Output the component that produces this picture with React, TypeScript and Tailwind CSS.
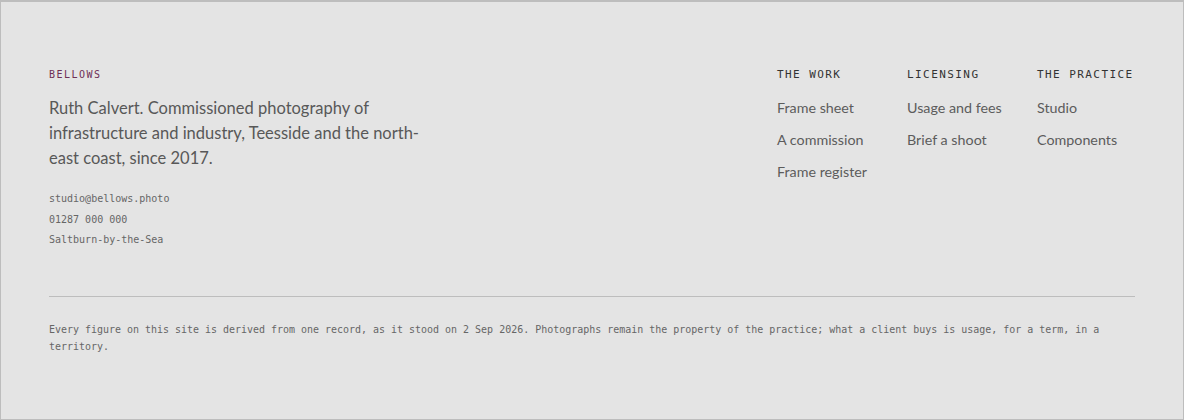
const mono = "font-['DejaVu_Sans_Mono','Liberation_Mono',monospace]";
const sans = "font-['Lato','Noto_Sans',sans-serif]";

const COLUMNS = [
  { title: "The work", links: ["Frame sheet", "A commission", "Frame register"] },
  { title: "Licensing", links: ["Usage and fees", "Brief a shoot"] },
  { title: "The practice", links: ["Studio", "Components"] },
];

export default function App() {
  return (
    <footer className="box-border h-[420px] w-full border border-t-2 border-[#bdbdbd] bg-[#e4e4e4] px-12 pt-[65px]">
      <div className="flex justify-between">
        <div className="w-[380px]">
          <p className={`${mono} text-[10px] uppercase leading-4 tracking-[0.15em] text-[#6e2f55]`}>Bellows</p>
          <p className={`${sans} mt-[13px] text-[16.5px] leading-[25px] text-[#585858]`}>
            Ruth Calvert. Commissioned photography of infrastructure and industry, Teesside and the north-east coast, since 2017.
          </p>
          <div className={`${mono} mt-[20px] flex flex-col gap-[4.5px] text-[10px] leading-4 text-[#666]`}>
            <span>studio@bellows.photo</span>
            <span>01287 000 000</span>
            <span>Saltburn-by-the-Sea</span>
          </div>
        </div>
        <nav className="flex gap-9">
          {COLUMNS.map((col) => (
            <div key={col.title} className="w-[94px] last:w-[98px]">
              <h3 className={`${mono} whitespace-nowrap text-[11px] font-normal uppercase leading-4 tracking-[0.13em] text-[#333]`}>
                {col.title}
              </h3>
              <ul className={`${sans} mt-[9px] flex flex-col text-[14.3px] leading-8 text-[#5c5c5c]`}>
                {col.links.map((l) => (
                  <li key={l} className="whitespace-nowrap">{l}</li>
                ))}
              </ul>
            </div>
          ))}
        </nav>
      </div>
      <div className="mt-[48px] border-t border-[#bdbdbd] pt-[24px]">
        <p className={`${mono} text-[9.97px] leading-[17px] text-[#666]`}>
          Every figure on this site is derived from one record, as it stood on 2 Sep 2026. Photographs remain the property of the practice; what a client buys is usage, for a term, in a territory.
        </p>
      </div>
    </footer>
  );
}
